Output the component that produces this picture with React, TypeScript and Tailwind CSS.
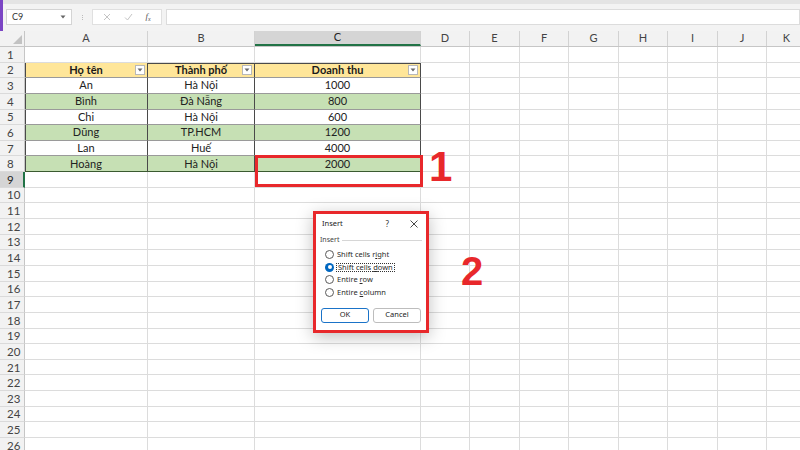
import React from 'react';

const COLS = [
  { key: 'A', w: 123 },
  { key: 'B', w: 107 },
  { key: 'C', w: 166 },
  { key: 'D', w: 49 },
  { key: 'E', w: 50 },
  { key: 'F', w: 49 },
  { key: 'G', w: 50 },
  { key: 'H', w: 49 },
  { key: 'I', w: 50 },
  { key: 'J', w: 49 },
  { key: 'K', w: 40 },
];

const DATA = [
  ['An', 'Hà Nội', '1000'],
  ['Bình', 'Đà Nẵng', '800'],
  ['Chi', 'Hà Nội', '600'],
  ['Dũng', 'TP.HCM', '1200'],
  ['Lan', 'Huế', '4000'],
  ['Hoàng', 'Hà Nội', '2000'],
];

const HEADERS = ['Họ tên', 'Thành phố', 'Doanh thu'];

const FilterButton = () => (
  <span className="absolute right-[2px] top-1/2 -translate-y-1/2 w-[10px] h-[10px] bg-white border border-[#b8b8b8] flex items-center justify-center">
    <svg width="6" height="4" viewBox="0 0 6 4"><path d="M0.5 0.5 L3 3.5 L5.5 0.5 Z" fill="#6b6b6b" /></svg>
  </span>
);

const Cell: React.FC<{ row: number; col: number; w: number }> = ({ row, col, w }) => {
  const inTable = row >= 2 && row <= 8 && col <= 2;
  if (!inTable) {
    return <div style={{ width: w }} className="shrink-0 h-full border-r border-b border-[#dcdcdc] bg-white" />;
  }
  if (row === 2) {
    return (
      <div
        style={{ width: w }}
        className={`relative shrink-0 h-full border-r border-b border-r-[#4a4a4a] border-b-[#9a9a9a] bg-[#ffe699] flex items-center justify-center font-bold text-[11px] text-[#1a1a1a] ${col === 0 ? 'shadow-[inset_1px_0_0_#4a4a4a]' : ''} shadow-[inset_0_1px_0_#4a4a4a]`}
      >
        {HEADERS[col]}
        <FilterButton />
      </div>
    );
  }
  const green = row % 2 === 0;
  return (
    <div
      style={{ width: w }}
      className={`shrink-0 h-full border-r border-b border-r-[#4a4a4a] ${row === 8 ? 'border-b-[#3a5a30]' : 'border-b-[#9a9a9a]'} ${green ? 'bg-[#c6e0b4]' : 'bg-white'} flex items-center justify-center text-[11px] text-[#222] ${col === 0 ? 'shadow-[inset_1px_0_0_#4a4a4a]' : ''}`}
    >
      {DATA[row - 3][col]}
    </div>
  );
};

const Radio: React.FC<{ checked?: boolean; children: React.ReactNode }> = ({ checked, children }) => (
  <div className="flex items-center gap-[3px] h-[12.5px]">
    {checked ? (
      <span className="w-[9px] h-[9px] rounded-full bg-[#0067c0] flex items-center justify-center">
        <span className="w-[4px] h-[4px] rounded-full bg-white" />
      </span>
    ) : (
      <span className="w-[9px] h-[9px] rounded-full border border-[#5a5a5a] bg-white" />
    )}
    <span className={`text-[7.5px] text-[#2a2a2a] leading-none ${checked ? 'outline outline-1 outline-dotted outline-[#333] px-[1px]' : ''}`}>{children}</span>
  </div>
);

export default function App() {
  const rows = Array.from({ length: 26 }, (_, i) => i + 1);
  return (
    <div className="relative w-[800px] h-[450px] overflow-hidden bg-white select-none" style={{ fontFamily: 'Lato, "Noto Sans", sans-serif' }}>
      {/* formula bar */}
      <div className="h-[31px] bg-[#f3f3f3] border-l-[3px] border-[#7b45c4] flex flex-col">
        <div className="h-[4px] bg-[#e4e4e4]" />
        <div className="flex items-center pl-[3px] pt-[5px] gap-0">
          <div className="w-[66px] h-[16px] bg-white border border-[#d4d4d4] flex items-center justify-between px-[5px]">
            <span className="text-[9px] text-[#333]">C9</span>
            <svg width="6" height="4" viewBox="0 0 6 4"><path d="M0.5 0.5 L3 3.5 L5.5 0.5 Z" fill="#666" /></svg>
          </div>
          <div className="w-[20px] flex flex-col items-center justify-center gap-[1px]">
            <span className="w-[1px] h-[1px] bg-[#bbb]" />
            <span className="w-[1px] h-[1px] bg-[#bbb]" />
            <span className="w-[1px] h-[1px] bg-[#bbb]" />
          </div>
          <div className="w-[70px] h-[16px] bg-white border border-[#e0e0e0] flex items-center justify-around px-[4px]">
            <svg width="8" height="8" viewBox="0 0 8 8"><path d="M1 1 L7 7 M7 1 L1 7" stroke="#c4c4c4" strokeWidth="1" /></svg>
            <svg width="9" height="8" viewBox="0 0 9 8"><path d="M1 4.5 L3.5 7 L8 1" stroke="#c4c4c4" strokeWidth="1" fill="none" /></svg>
            <span className="text-[9px] italic text-[#555]" style={{ fontFamily: '"Liberation Serif", serif' }}>f<sub className="text-[6px]">x</sub></span>
          </div>
          <div className="ml-[4px] flex-1 h-[16px] bg-white border border-[#dcdcdc]" />
        </div>
      </div>

      {/* column headers */}
      <div className="flex h-[16px] bg-[#f2f2f2] border-b border-[#c6c6c6]">
        <div className="w-[25px] shrink-0 h-full border-r border-[#c6c6c6] relative">
          <svg className="absolute right-[2px] bottom-[2px]" width="9" height="9" viewBox="0 0 9 9"><path d="M9 0 L9 9 L0 9 Z" fill="#c2c2c2" /></svg>
        </div>
        {COLS.map((c, i) => (
          <div
            key={c.key}
            style={{ width: c.w }}
            className={`shrink-0 h-full flex items-center justify-center text-[11px] border-r border-[#d2d2d2] ${i === 2 ? 'bg-[#d5d5d5] border-b-2 border-b-[#217346] text-[#222]' : 'text-[#444]'}`}
          >
            {c.key}
          </div>
        ))}
      </div>

      {/* grid */}
      <div className="flex flex-col">
        {rows.map((r) => (
          <div key={r} className="flex h-[15.65px]">
            <div
              className={`w-[25px] shrink-0 h-full flex items-center pl-[7px] text-[11.5px] border-b border-[#dadada] ${r === 9 ? 'bg-[#d5d5d5] border-r-2 border-r-[#217346] text-[#222]' : 'bg-[#f2f2f2] border-r border-r-[#c6c6c6] text-[#444]'}`}
            >
              {r}
            </div>
            {COLS.map((c, i) => (
              <Cell key={c.key} row={r} col={i} w={c.w} />
            ))}
          </div>
        ))}
      </div>

      {/* annotation 1 */}
      <div className="absolute left-[255px] top-[155px] w-[168px] h-[32px] border-[3px] border-[#e8282b]" />
      <div className="absolute left-[429px] top-[146px] text-[42px] font-bold leading-none text-[#e8282b]" style={{ fontFamily: '"Liberation Sans", Arial, sans-serif' }}>1</div>

      {/* Insert dialog */}
      <div className="absolute left-[313px] top-[211px] w-[116px] h-[122px] border-[3px] border-[#e8282b] bg-white shadow-[0_4px_16px_rgba(0,0,0,0.25)] flex flex-col px-[4px]" style={{ fontFamily: '"Noto Sans", sans-serif' }}>
        <div className="h-[20px] flex items-center justify-between pl-[2px] pr-[4px]">
          <span className="text-[7.5px] text-[#222]">Insert</span>
          <div className="flex items-center gap-[21px]">
            <span className="text-[8px] text-[#333]">?</span>
            <svg width="8" height="8" viewBox="0 0 8 8"><path d="M0.5 0.5 L7.5 7.5 M7.5 0.5 L0.5 7.5" stroke="#333" strokeWidth="0.9" /></svg>
          </div>
        </div>
        <div className="flex items-center gap-[3px] mt-[1px]">
          <span className="text-[7px] text-[#444]">Insert</span>
          <span className="flex-1 h-px bg-[#d6d6d6]" />
        </div>
        <div className="flex flex-col mt-[3px] pl-[5px]">
          <Radio>Shift cells r<u>i</u>ght</Radio>
          <Radio checked>Shift cells <u>d</u>own</Radio>
          <Radio>Entire <u>r</u>ow</Radio>
          <Radio>Entire <u>c</u>olumn</Radio>
        </div>
        <div className="flex justify-between mt-[9px] px-[1px]">
          <div className="w-[48px] h-[15px] rounded-[3px] border-[1.5px] border-[#1a73c8] flex items-center justify-center text-[7.5px] text-[#222]">OK</div>
          <div className="w-[48px] h-[15px] rounded-[3px] border border-[#bdbdbd] flex items-center justify-center text-[7.5px] text-[#222]">Cancel</div>
        </div>
      </div>

      {/* annotation 2 */}
      <div className="absolute left-[461px] top-[251px] text-[40px] font-bold leading-none text-[#e8282b]" style={{ fontFamily: '"Liberation Sans", Arial, sans-serif' }}>2</div>
    </div>
  );
}
